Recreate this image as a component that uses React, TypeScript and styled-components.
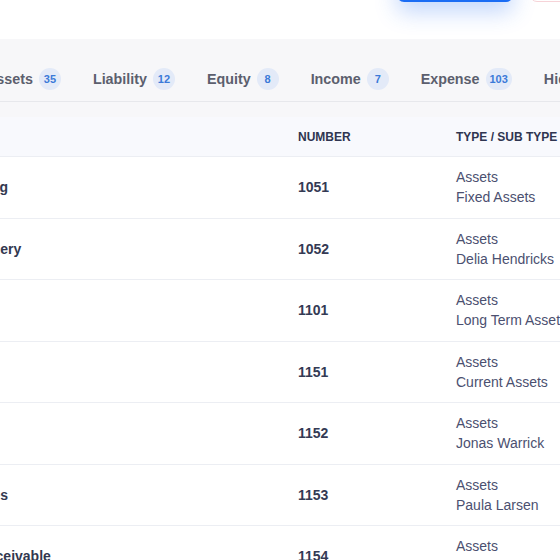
import { FC } from 'react';
import styled, { createGlobalStyle } from 'styled-components';

const GlobalStyle = createGlobalStyle`
  html, body {
    margin: 0;
    padding: 0;
    background: #ffffff;
    overflow: hidden;
  }

  body {
    font-family: "Liberation Sans", Arial, sans-serif;
  }
`;

const Viewport = styled.div`
  width: 560px;
  height: 560px;
  overflow: hidden;
  position: relative;
`;

const Canvas = styled.div`
  width: 1100px;
  margin-left: -128px;
  padding: 0 24px;
`;

const TopBar = styled.div`
  height: 39px;
  display: flex;
  align-items: flex-start;
  gap: 17px;
  padding-left: 501px;
`;

const PrimaryButton = styled.button`
  width: 116px;
  height: 36px;
  margin-top: -34px;
  border: none;
  border-radius: 7px;
  background: #1a6cf4;
  box-shadow: 0 10px 22px rgba(40, 110, 245, 0.28);
`;

const DangerButton = styled.button`
  width: 110px;
  height: 36px;
  margin-top: -34px;
  border: 1px solid #f6d3d8;
  border-radius: 7px;
  background: #ffffff;
`;

const Card = styled.div`
  background: #f7f7f9;
  padding-bottom: 15px;
`;

const TabsRow = styled.div`
  display: flex;
  gap: 32px;
  padding: 29px 0 0 90px;
  border-bottom: 1px solid #e7e8ec;
`;

const Tab = styled.div`
  display: flex;
  align-items: center;
  gap: 6px;
  height: 22px;
  padding-bottom: 11px;
  font-size: 14.3px;
  font-weight: 700;
  color: #5c5f6e;
  white-space: nowrap;
`;

const Badge = styled.span`
  min-width: 22px;
  height: 22px;
  padding: 0 4px;
  box-sizing: border-box;
  border-radius: 11px;
  background: #e3eaf8;
  color: #3b7ad8;
  font-size: 11px;
  font-weight: 700;
  display: inline-flex;
  align-items: center;
  justify-content: center;
`;

const Table = styled.div`
  background: #ffffff;
`;

const Row = styled.div<{ $head?: boolean }>`
  display: grid;
  grid-template-columns: 40px 346px 158px 260px;
  align-items: center;
  padding-left: 16px;
  border-bottom: 1px solid #eceef3;
  background: ${(p) => (p.$head ? '#f8f9fd' : '#ffffff')};
  height: ${(p) => (p.$head ? '39px' : '60.5px')};
`;

const HeadCell = styled.div`
  font-size: 12px;
  font-weight: 700;
  color: #2f3550;
  text-transform: uppercase;
  white-space: nowrap;
`;

const NameCell = styled.div`
  font-size: 14px;
  font-weight: 700;
  color: #323850;
  white-space: nowrap;
`;

const NumberCell = styled.div`
  font-size: 14px;
  font-weight: 700;
  color: #343a54;
`;

const TypeCell = styled.div`
  font-size: 14px;
  line-height: 20px;
  color: #4b5070;
  white-space: nowrap;
`;

const Check = styled.span`
  display: block;
  width: 16px;
  height: 16px;
  border: 1px solid #d5d8e0;
  border-radius: 4px;
`;

const tabs = [
  { label: 'Assets', count: 35 },
  { label: 'Liability', count: 12 },
  { label: 'Equity', count: 8 },
  { label: 'Income', count: 7 },
  { label: 'Expense', count: 103 },
  { label: 'Hidden', count: 2 },
];

const accounts = [
  { name: 'Building', number: 1051, type: 'Assets', sub: 'Fixed Assets' },
  { name: 'Machinery', number: 1052, type: 'Assets', sub: 'Delia Hendricks' },
  { name: 'Land', number: 1101, type: 'Assets', sub: 'Long Term Assets' },
  { name: 'Cash', number: 1151, type: 'Assets', sub: 'Current Assets' },
  { name: 'Bank', number: 1152, type: 'Assets', sub: 'Jonas Warrick' },
  { name: 'Vehicles', number: 1153, type: 'Assets', sub: 'Paula Larsen' },
  { name: 'Bill Receivable', number: 1154, type: 'Assets', sub: 'Current Assets' },
];

const App: FC = () => {
  return (
    <Viewport>
      <GlobalStyle />
      <Canvas>
        <TopBar>
          <PrimaryButton />
          <DangerButton />
        </TopBar>
        <Card>
          <TabsRow>
            {tabs.map((tab) => (
              <Tab key={tab.label}>
                {tab.label}
                <Badge>{tab.count}</Badge>
              </Tab>
            ))}
          </TabsRow>
        </Card>
        <Table>
          <Row $head>
            <Check />
            <HeadCell>Name</HeadCell>
            <HeadCell>Number</HeadCell>
            <HeadCell>Type / Sub Type</HeadCell>
          </Row>
          {accounts.map((acc) => (
            <Row key={acc.number}>
              <Check />
              <NameCell>{acc.name}</NameCell>
              <NumberCell>{acc.number}</NumberCell>
              <TypeCell>
                {acc.type}
                <br />
                {acc.sub}
              </TypeCell>
            </Row>
          ))}
        </Table>
      </Canvas>
    </Viewport>
  );
};

export default App;
